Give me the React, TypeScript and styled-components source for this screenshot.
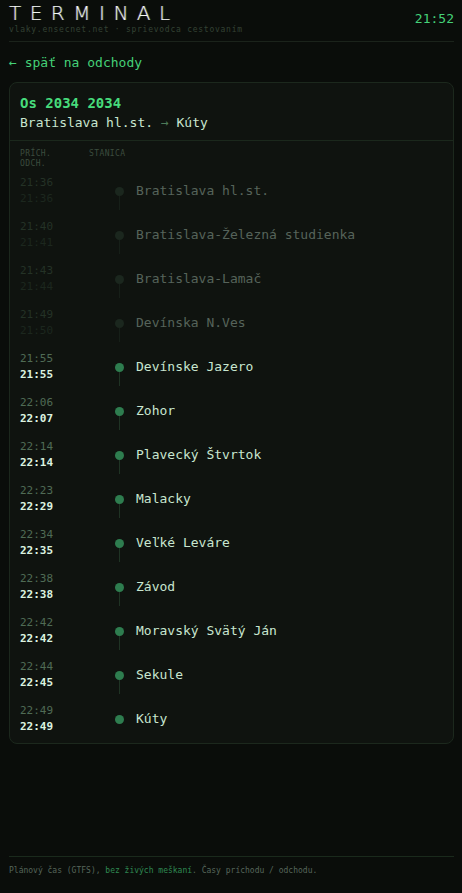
import React from 'react'
import styled, { createGlobalStyle } from 'styled-components'

const GlobalStyle = createGlobalStyle`
  html, body {
    margin: 0;
    padding: 0;
    background: #0a0d0a;
  }
  body {
    font-family: "DejaVu Sans Mono", "Liberation Mono", monospace;
    color: #cfe8d4;
  }
  * { box-sizing: border-box; }
`

const Page = styled.div`
  min-height: 100vh;
  display: flex;
  flex-direction: column;
  padding: 0 8px 0 9px;
`

const TopBar = styled.header`
  display: flex;
  justify-content: space-between;
  align-items: flex-start;
  padding: 2px 0 5px;
  border-bottom: 1px solid #1b231b;
`

const Brand = styled.div`
  display: flex;
  flex-direction: column;
`

const Logo = styled.div`
  font-family: "DejaVu Sans", "Liberation Sans", sans-serif;
  font-weight: 200;
  font-size: 20px;
  line-height: 22px;
  letter-spacing: 8.5px;
  color: #f2f6f3;
  text-shadow: -1px 0 rgba(255, 60, 120, 0.3), 1px 0 rgba(60, 255, 210, 0.3);
`

const Tagline = styled.div`
  font-size: 8px;
  line-height: 12px;
  letter-spacing: 0.75px;
  color: #344234;
`

const Clock = styled.div`
  margin-top: 8px;
  font-size: 13px;
  line-height: 18px;
  color: #45d178;
`

const BackLink = styled.a`
  display: block;
  margin-top: 12px;
  font-size: 13px;
  line-height: 18px;
  color: #45d178;
  text-decoration: none;
  cursor: pointer;
`

const Card = styled.section`
  margin-top: 10px;
  border: 1px solid #1c281d;
  border-radius: 8px;
  background: #0f130f;
  padding-bottom: 2px;
`

const CardHead = styled.div`
  padding: 10px 10px 7px;
  border-bottom: 1px solid #1b281c;
`

const TrainName = styled.div`
  font-size: 14px;
  line-height: 20px;
  font-weight: 700;
  color: #47dc7c;
`

const Route = styled.div`
  font-size: 13px;
  line-height: 20px;
  color: #c8e6cf;

  span {
    color: #4d7a58;
  }
`

const Columns = styled.div`
  display: flex;
  padding: 8px 10px 0;
  font-size: 8px;
  line-height: 10px;
  letter-spacing: 0.4px;
  color: #3c4c3e;
`

const ColTime = styled.div`
  width: 69px;
`

const Stops = styled.ol`
  list-style: none;
  margin: 0;
  padding: 0 10px;
`

const Stop = styled.li`
  display: grid;
  grid-template-columns: 82px 22px 1fr;
  column-gap: 6px;
  align-items: center;
  height: 44px;
`

const Times = styled.div`
  display: flex;
  flex-direction: column;
`

const Arr = styled.span<{ $past: boolean }>`
  font-size: 11px;
  line-height: 16px;
  color: ${p => (p.$past ? '#243226' : '#4f6b55')};
`

const Dep = styled.span<{ $past: boolean }>`
  font-size: 11px;
  line-height: 16px;
  font-weight: ${p => (p.$past ? 400 : 700)};
  color: ${p => (p.$past ? '#1c271e' : '#dcf3e0')};
`

const Rail = styled.div<{ $last: boolean; $past: boolean }>`
  position: relative;
  height: 100%;
  display: flex;
  align-items: center;
  justify-content: center;

  &::before {
    content: '';
    width: 9px;
    height: 9px;
    border-radius: 50%;
    background: ${p => (p.$past ? '#1b271e' : '#2e7d4f')};
  }

  &::after {
    content: '';
    display: ${p => (p.$last ? 'none' : 'block')};
    position: absolute;
    left: 50%;
    top: calc(50% + 5px);
    width: 1px;
    height: 14px;
    background: ${p => (p.$past ? '#161f18' : '#1f3324')};
  }
`

const StationName = styled.span<{ $past: boolean }>`
  font-size: 13px;
  line-height: 18px;
  color: ${p => (p.$past ? '#56635a' : '#c8e6cf')};
  white-space: nowrap;
`

const Footer = styled.footer`
  margin-top: auto;
  border-top: 1px solid #1a2a1c;
  padding: 8px 0 16px;
  font-size: 8px;
  line-height: 12px;
  color: #56665a;

  em {
    font-style: normal;
    color: #2f8a52;
  }
`

type StopRow = { arr: string; dep: string; name: string; past?: boolean }

const stops: StopRow[] = [
  { arr: '21:36', dep: '21:36', name: 'Bratislava hl.st.', past: true },
  { arr: '21:40', dep: '21:41', name: 'Bratislava-Železná studienka', past: true },
  { arr: '21:43', dep: '21:44', name: 'Bratislava-Lamač', past: true },
  { arr: '21:49', dep: '21:50', name: 'Devínska N.Ves', past: true },
  { arr: '21:55', dep: '21:55', name: 'Devínske Jazero' },
  { arr: '22:06', dep: '22:07', name: 'Zohor' },
  { arr: '22:14', dep: '22:14', name: 'Plavecký Štvrtok' },
  { arr: '22:23', dep: '22:29', name: 'Malacky' },
  { arr: '22:34', dep: '22:35', name: 'Veľké Leváre' },
  { arr: '22:38', dep: '22:38', name: 'Závod' },
  { arr: '22:42', dep: '22:42', name: 'Moravský Svätý Ján' },
  { arr: '22:44', dep: '22:45', name: 'Sekule' },
  { arr: '22:49', dep: '22:49', name: 'Kúty' },
]

export default function App() {
  return (
    <>
      <GlobalStyle />
      <Page>
        <TopBar>
          <Brand>
            <Logo>TERMINAL</Logo>
            <Tagline>vlaky.ensecnet.net · sprievodca cestovaním</Tagline>
          </Brand>
          <Clock>21:52</Clock>
        </TopBar>

        <BackLink>← späť na odchody</BackLink>

        <Card>
          <CardHead>
            <TrainName>Os 2034 2034</TrainName>
            <Route>
              Bratislava hl.st. <span>→</span> Kúty
            </Route>
          </CardHead>

          <Columns>
            <ColTime>
              PRÍCH.
              <br />
              ODCH.
            </ColTime>
            <div>STANICA</div>
          </Columns>

          <Stops>
            {stops.map((s, i) => {
              const past = !!s.past
              return (
                <Stop key={s.name}>
                  <Times>
                    <Arr $past={past}>{s.arr}</Arr>
                    <Dep $past={past}>{s.dep}</Dep>
                  </Times>
                  <Rail $last={i === stops.length - 1} $past={past} />
                  <StationName $past={past}>{s.name}</StationName>
                </Stop>
              )
            })}
          </Stops>
        </Card>

        <Footer>
          Plánový čas (GTFS), <em>bez živých meškaní</em>. Časy príchodu / odchodu.
        </Footer>
      </Page>
    </>
  )
}
